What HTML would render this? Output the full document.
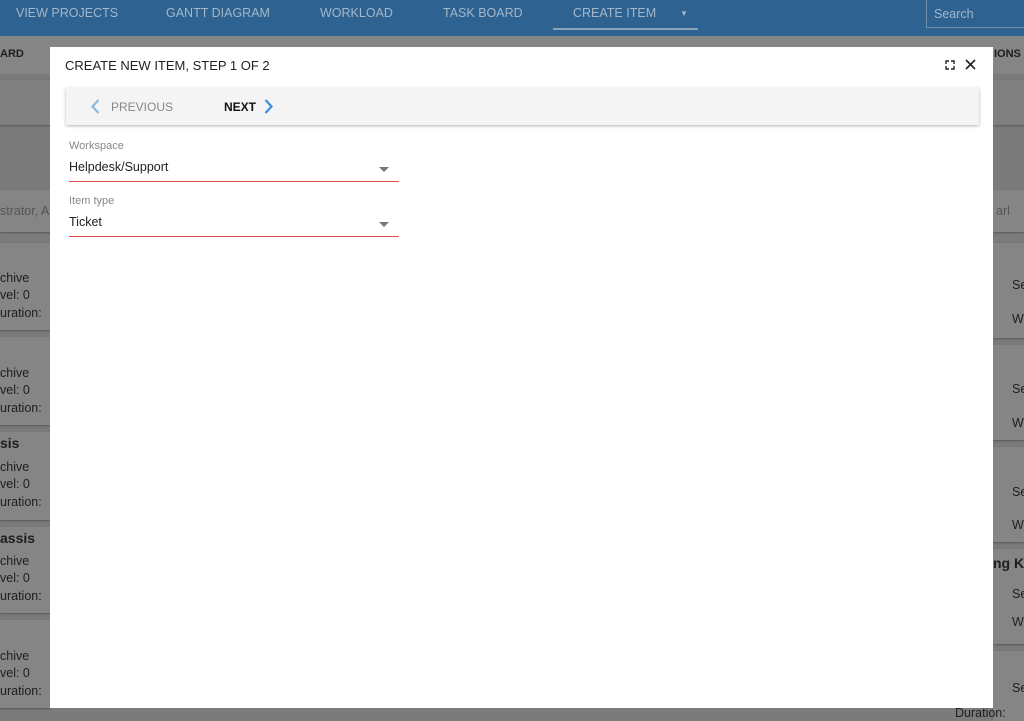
<!DOCTYPE html>
<html><head><style>
*{margin:0;padding:0;box-sizing:border-box}
body{width:1024px;height:721px;overflow:hidden;background:#7b7b7b;font-family:"Liberation Sans",sans-serif;position:relative}
.nav{position:absolute;left:0;top:0;width:1024px;height:36px;background:#2e6290}
.nav span{position:absolute;top:6px;font-size:12.5px;color:#a3b7c9}
.bar2{position:absolute;left:0;top:36px;width:1024px;height:38px;background:#858585}
.card{position:absolute;background:#858585;box-shadow:0 1px 2px rgba(0,0,0,.3)}
.t{position:absolute;font-size:12.5px;color:#1e1e1e;white-space:nowrap}
.modal{position:absolute;left:50px;top:47px;width:943px;height:661px;background:#fff}
.title{position:absolute;left:15px;top:11px;font-size:13px;color:#222}
.tb{position:absolute;left:16px;top:41px;width:913px;height:37px;background:#f4f4f4;box-shadow:0 1px 3px rgba(0,0,0,.3)}
.lbl{position:absolute;left:19px;font-size:11px;color:#888}
.val{position:absolute;left:19px;font-size:12.5px;color:#222}
.line{position:absolute;left:19px;width:330px;height:1px;background:#e24b4b}
.caret{position:absolute;left:329px;width:0;height:0;border-left:5px solid transparent;border-right:5px solid transparent;border-top:5px solid #777}
</style></head><body>
<div class="nav">
<span style="left:16px">VIEW PROJECTS</span>
<span style="left:166px">GANTT DIAGRAM</span>
<span style="left:320px">WORKLOAD</span>
<span style="left:443px">TASK BOARD</span>
<span style="left:573px">CREATE ITEM</span>
<span style="left:680px;font-size:8px;top:9px">▼</span>
<div style="position:absolute;left:553px;top:28px;width:145px;height:2px;background:#8aa3b8"></div>
<div style="position:absolute;left:926px;top:0;width:100px;height:28px;border:1px solid #6e8da8;border-top:none"></div>
<span style="left:934px;top:7px">Search</span>
</div>
<div class="bar2"></div>
<div class="t" style="left:0;top:48px;font-weight:bold;font-size:11px">ARD</div>
<div class="t" style="left:994px;top:48px;font-weight:bold;font-size:11px">IONS</div>
<div class="card" style="left:0;top:80px;width:1024px;height:45px;background:#808080"></div>
<div class="card" style="left:0;top:190px;width:1024px;height:42px;background:#858585"></div>
<div class="t" style="left:0;top:204px;color:#555">strator, A</div>
<div class="t" style="left:996px;top:204px;color:#555">arl</div>

<div class="card" style="left:0;top:243px;width:50px;height:87px"></div>
<div class="card" style="left:0;top:337px;width:50px;height:88px"></div>
<div class="card" style="left:0;top:432px;width:50px;height:88px"></div>
<div class="card" style="left:0;top:527px;width:50px;height:86px"></div>
<div class="card" style="left:0;top:620px;width:50px;height:88px"></div>
<div class="t" style="left:0;top:271px">chive</div><div class="t" style="left:0;top:288px">vel: 0</div><div class="t" style="left:0;top:306px">uration:</div>
<div class="t" style="left:0;top:366px">chive</div><div class="t" style="left:0;top:383px">vel: 0</div><div class="t" style="left:0;top:401px">uration:</div>
<div class="t" style="left:0;top:435px;font-weight:bold;font-size:14px">sis</div>
<div class="t" style="left:0;top:460px">chive</div><div class="t" style="left:0;top:477px">vel: 0</div><div class="t" style="left:0;top:495px">uration:</div>
<div class="t" style="left:0;top:530px;font-weight:bold;font-size:14px">assis</div>
<div class="t" style="left:0;top:554px">chive</div><div class="t" style="left:0;top:571px">vel: 0</div><div class="t" style="left:0;top:589px">uration:</div>
<div class="t" style="left:0;top:649px">chive</div><div class="t" style="left:0;top:666px">vel: 0</div><div class="t" style="left:0;top:684px">uration:</div>

<div class="card" style="left:993px;top:243px;width:31px;height:95px"></div>
<div class="card" style="left:993px;top:345px;width:31px;height:95px"></div>
<div class="card" style="left:993px;top:447px;width:31px;height:95px"></div>
<div class="card" style="left:993px;top:549px;width:31px;height:95px"></div>
<div class="card" style="left:993px;top:651px;width:31px;height:70px"></div>
<div class="t" style="left:1012px;top:278px">Se</div><div class="t" style="left:1012px;top:312px">W</div>
<div class="t" style="left:1012px;top:382px">Se</div><div class="t" style="left:1012px;top:416px">W</div>
<div class="t" style="left:1012px;top:485px">Se</div><div class="t" style="left:1012px;top:518px">W</div>
<div class="t" style="left:993px;top:555px;font-size:14px;font-weight:bold">ng KV</div>
<div class="t" style="left:1012px;top:587px">Se</div><div class="t" style="left:1012px;top:615px">W</div>
<div class="t" style="left:1012px;top:681px">Se</div>
<div class="t" style="left:955px;top:706px">Duration:</div>

<div class="modal">
<div class="title">CREATE NEW ITEM, STEP 1 OF 2</div>
<svg style="position:absolute;left:895px;top:13px" width="10" height="10" viewBox="0 0 10 10" fill="none" stroke="#222" stroke-width="1.4"><path d="M1 4V1h3M6 1h3v3M9 6v3H6M4 9H1V6"/></svg>
<svg style="position:absolute;left:915px;top:12px" width="11" height="11" viewBox="0 0 11 11" stroke="#222" stroke-width="1.6"><path d="M1 1l9 9M10 1l-9 9"/></svg>
<div class="tb">
<svg style="position:absolute;left:25px;top:11px" width="9" height="15" viewBox="0 0 9 15" fill="none" stroke="#8fb8e6" stroke-width="2.2"><path d="M7.5 1L1.5 7.5l6 6.5"/></svg>
<div style="position:absolute;left:45px;top:12px;font-size:12px;color:#888">PREVIOUS</div>
<div style="position:absolute;left:158px;top:12px;font-size:12px;color:#111;font-weight:bold">NEXT</div>
<svg style="position:absolute;left:198px;top:11px" width="9" height="15" viewBox="0 0 9 15" fill="none" stroke="#3a8ee0" stroke-width="2.2"><path d="M1.5 1l6 6.5-6 6.5"/></svg>
</div>
<div class="lbl" style="top:93px">Workspace</div>
<div class="val" style="top:113px">Helpdesk/Support</div>
<div class="caret" style="top:120px"></div>
<div class="line" style="top:134px;height:1px;background:#e24b4b"></div>
<div class="lbl" style="top:148px">Item type</div>
<div class="val" style="top:168px">Ticket</div>
<div class="caret" style="top:175px"></div>
<div class="line" style="top:189px"></div>
</div>
</body></html>
